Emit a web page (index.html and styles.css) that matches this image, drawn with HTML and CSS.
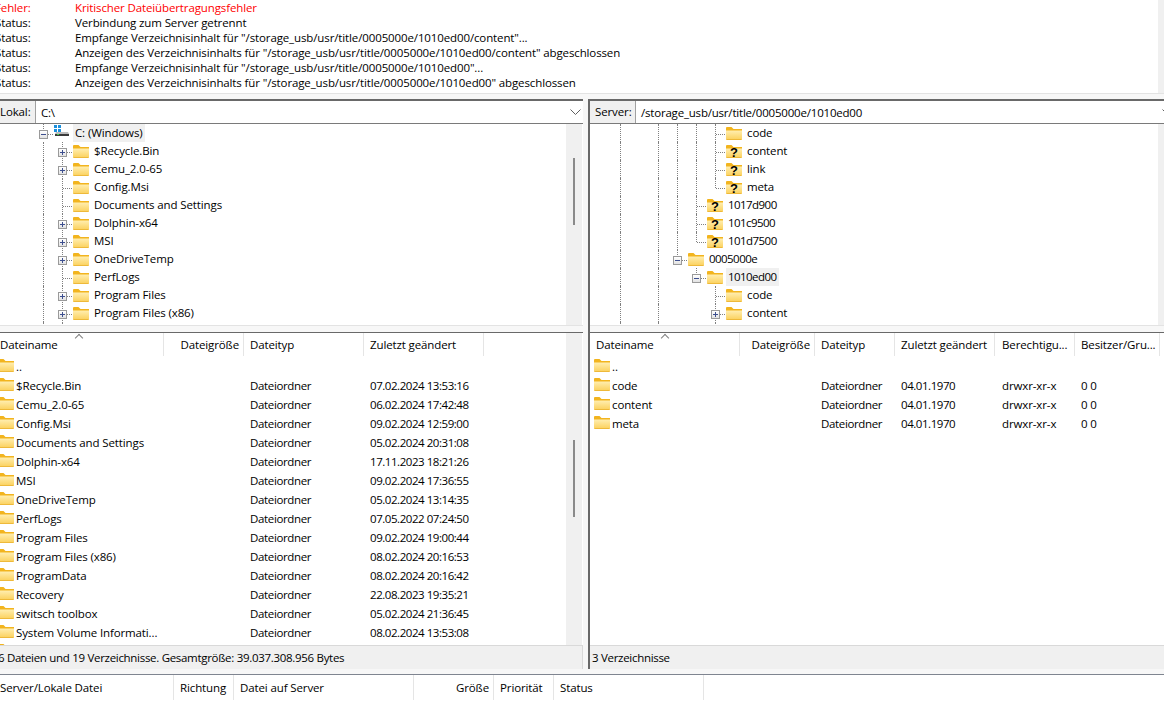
FILE: index.html
```html
<!DOCTYPE html>
<html lang="de">
<head>
    <meta charset="UTF-8">
    <title>FileZilla</title>
    <link rel="stylesheet" href="styles.css">
</head>
<body>
    <svg class="defs" width="0" height="0">
        <defs>
            <linearGradient id="fbody" x1="0" y1="0" x2="0" y2="1">
                <stop offset="0" stop-color="#ffeeb0"/>
                <stop offset="1" stop-color="#fbd05a"/>
            </linearGradient>
            <symbol id="folder" viewBox="0 0 16 13">
                <path d="M0 1.2C0 .5.5 0 1.2 0h4.3l2 2H16v3H0z" fill="#f2b41e"/>
                <path d="M0 3.5h16V12a1 1 0 0 1-1 1H1a1 1 0 0 1-1-1z" fill="url(#fbody)"/>
                <path d="M.5 12.5h15" stroke="#eeb93a"/>
            </symbol>
            <symbol id="folder-q" viewBox="0 0 16 13">
                <use href="#folder" width="16" height="13"/>
                <text x="8" y="12" class="q">?</text>
            </symbol>
        </defs>
    </svg>

    <div class="log">
        <div class="err"><span>Fehler:</span><span>Kritischer Dateiübertragungsfehler</span></div>
        <div><span>Status:</span><span>Verbindung zum Server getrennt</span></div>
        <div><span>Status:</span><span>Empfange Verzeichnisinhalt für "/storage_usb/usr/title/0005000e/1010ed00/content"...</span></div>
        <div><span>Status:</span><span>Anzeigen des Verzeichnisinhalts für "/storage_usb/usr/title/0005000e/1010ed00/content" abgeschlossen</span></div>
        <div><span>Status:</span><span>Empfange Verzeichnisinhalt für "/storage_usb/usr/title/0005000e/1010ed00"...</span></div>
        <div><span>Status:</span><span>Anzeigen des Verzeichnisinhalts für "/storage_usb/usr/title/0005000e/1010ed00" abgeschlossen</span></div>
    </div>

    <div class="panes">
        <!-- local side -->
        <section class="pane pane-local">
            <div class="pathbar">
                <label>Lokal:</label>
                <div class="path">C:\<svg class="chev" width="11" height="6" viewBox="0 0 11 6"><path d="M.5.5l5 5 5-5" fill="none" stroke="#606060"/></svg></div>
            </div>
            <div class="tree-wrap">
                <div class="tree tree-local">
                    <div class="node"><i class="c minus"></i><svg class="drive" width="16" height="13" viewBox="0 0 16 13"><path d="M0 0h3v3H0zM4 0h3v3H4zM0 4h3v3H0zM4 4h3v3H4z" fill="#1b8fdc"/><path d="M2 7h12l1 2H1z" fill="#bcbcbc"/><path d="M1 9h14v2H1z" fill="#3a3a3a"/><path d="M3 9h2v1H3z" fill="#3fd14a"/></svg><span class="sel">C: (Windows)</span></div>
                    <div class="node"><i class="c g"></i><i class="c plus"></i><svg class="ic"><use href="#folder"/></svg><span>$Recycle.Bin</span></div>
                    <div class="node"><i class="c g"></i><i class="c plus"></i><svg class="ic"><use href="#folder"/></svg><span>Cemu_2.0-65</span></div>
                    <div class="node"><i class="c g"></i><i class="c t"></i><svg class="ic"><use href="#folder"/></svg><span>Config.Msi</span></div>
                    <div class="node"><i class="c g"></i><i class="c t"></i><svg class="ic"><use href="#folder"/></svg><span>Documents and Settings</span></div>
                    <div class="node"><i class="c g"></i><i class="c plus"></i><svg class="ic"><use href="#folder"/></svg><span>Dolphin-x64</span></div>
                    <div class="node"><i class="c g"></i><i class="c plus"></i><svg class="ic"><use href="#folder"/></svg><span>MSI</span></div>
                    <div class="node"><i class="c g"></i><i class="c plus"></i><svg class="ic"><use href="#folder"/></svg><span>OneDriveTemp</span></div>
                    <div class="node"><i class="c g"></i><i class="c t"></i><svg class="ic"><use href="#folder"/></svg><span>PerfLogs</span></div>
                    <div class="node"><i class="c g"></i><i class="c plus"></i><svg class="ic"><use href="#folder"/></svg><span>Program Files</span></div>
                    <div class="node"><i class="c g"></i><i class="c plus"></i><svg class="ic"><use href="#folder"/></svg><span>Program Files (x86)</span></div>
                    <div class="node"><i class="c g"></i><i class="c t"></i><svg class="ic"><use href="#folder"/></svg><span>ProgramData</span></div>
                </div>
                <div class="vscroll"><b class="thumb thumb-tree"></b></div>
            </div>
            <div class="sash"></div>
            <div class="list-wrap">
                <div class="list list-local">
                    <div class="row head"><span>Dateiname</span><span class="num">Dateigröße</span><span>Dateityp</span><span>Zuletzt geändert</span></div>
                    <div class="sort"></div>
                    <div class="row"><span class="name"><svg class="ic"><use href="#folder"/></svg>..</span></div>
                    <div class="row"><span class="name"><svg class="ic"><use href="#folder"/></svg>$Recycle.Bin</span><span></span><span>Dateiordner</span><span>07.02.2024 13:53:16</span></div>
                    <div class="row"><span class="name"><svg class="ic"><use href="#folder"/></svg>Cemu_2.0-65</span><span></span><span>Dateiordner</span><span>06.02.2024 17:42:48</span></div>
                    <div class="row"><span class="name"><svg class="ic"><use href="#folder"/></svg>Config.Msi</span><span></span><span>Dateiordner</span><span>09.02.2024 12:59:00</span></div>
                    <div class="row"><span class="name"><svg class="ic"><use href="#folder"/></svg>Documents and Settings</span><span></span><span>Dateiordner</span><span>05.02.2024 20:31:08</span></div>
                    <div class="row"><span class="name"><svg class="ic"><use href="#folder"/></svg>Dolphin-x64</span><span></span><span>Dateiordner</span><span>17.11.2023 18:21:26</span></div>
                    <div class="row"><span class="name"><svg class="ic"><use href="#folder"/></svg>MSI</span><span></span><span>Dateiordner</span><span>09.02.2024 17:36:55</span></div>
                    <div class="row"><span class="name"><svg class="ic"><use href="#folder"/></svg>OneDriveTemp</span><span></span><span>Dateiordner</span><span>05.02.2024 13:14:35</span></div>
                    <div class="row"><span class="name"><svg class="ic"><use href="#folder"/></svg>PerfLogs</span><span></span><span>Dateiordner</span><span>07.05.2022 07:24:50</span></div>
                    <div class="row"><span class="name"><svg class="ic"><use href="#folder"/></svg>Program Files</span><span></span><span>Dateiordner</span><span>09.02.2024 19:00:44</span></div>
                    <div class="row"><span class="name"><svg class="ic"><use href="#folder"/></svg>Program Files (x86)</span><span></span><span>Dateiordner</span><span>08.02.2024 20:16:53</span></div>
                    <div class="row"><span class="name"><svg class="ic"><use href="#folder"/></svg>ProgramData</span><span></span><span>Dateiordner</span><span>08.02.2024 20:16:42</span></div>
                    <div class="row"><span class="name"><svg class="ic"><use href="#folder"/></svg>Recovery</span><span></span><span>Dateiordner</span><span>22.08.2023 19:35:21</span></div>
                    <div class="row"><span class="name"><svg class="ic"><use href="#folder"/></svg>switsch toolbox</span><span></span><span>Dateiordner</span><span>05.02.2024 21:36:45</span></div>
                    <div class="row"><span class="name"><svg class="ic"><use href="#folder"/></svg>System Volume Informati...</span><span></span><span>Dateiordner</span><span>08.02.2024 13:53:08</span></div>
                    <div class="row"><span class="name"><svg class="ic"><use href="#folder"/></svg></span></div>
                </div>
                <div class="vscroll"><b class="thumb thumb-list"></b></div>
            </div>
            <div class="status status-local">6 Dateien und 19 Verzeichnisse. Gesamtgröße: 39.037.308.956 Bytes</div>
        </section>

        <div class="vsash"></div>

        <!-- remote side -->
        <section class="pane pane-remote">
            <div class="pathbar">
                <label>Server:</label>
                <div class="path">/storage_usb/usr/title/0005000e/1010ed00<svg class="chev" width="11" height="6" viewBox="0 0 11 6"><path d="M.5.5l5 5 5-5" fill="none" stroke="#606060"/></svg></div>
            </div>
            <div class="tree-wrap">
                <div class="tree tree-remote">
                    <div class="node"><i class="c g"></i><i class="c"></i><i class="c g"></i><i class="c g"></i><i class="c g"></i><i class="c t"></i><svg class="ic"><use href="#folder"/></svg><span>code</span></div>
                    <div class="node"><i class="c g"></i><i class="c"></i><i class="c g"></i><i class="c g"></i><i class="c g"></i><i class="c t"></i><svg class="ic"><use href="#folder-q"/></svg><span>content</span></div>
                    <div class="node"><i class="c g"></i><i class="c"></i><i class="c g"></i><i class="c g"></i><i class="c g"></i><i class="c t"></i><svg class="ic"><use href="#folder-q"/></svg><span>link</span></div>
                    <div class="node"><i class="c g"></i><i class="c"></i><i class="c g"></i><i class="c g"></i><i class="c g"></i><i class="c e"></i><svg class="ic"><use href="#folder-q"/></svg><span>meta</span></div>
                    <div class="node"><i class="c g"></i><i class="c"></i><i class="c g"></i><i class="c g"></i><i class="c t"></i><svg class="ic"><use href="#folder-q"/></svg><span class="hex">1017d900</span></div>
                    <div class="node"><i class="c g"></i><i class="c"></i><i class="c g"></i><i class="c g"></i><i class="c t"></i><svg class="ic"><use href="#folder-q"/></svg><span class="hex">101c9500</span></div>
                    <div class="node"><i class="c g"></i><i class="c"></i><i class="c g"></i><i class="c g"></i><i class="c e"></i><svg class="ic"><use href="#folder-q"/></svg><span class="hex">101d7500</span></div>
                    <div class="node"><i class="c g"></i><i class="c"></i><i class="c g"></i><i class="c minus"></i><svg class="ic"><use href="#folder"/></svg><span class="hex">0005000e</span></div>
                    <div class="node"><i class="c g"></i><i class="c"></i><i class="c g"></i><i class="c"></i><i class="c minus"></i><svg class="ic"><use href="#folder"/></svg><span class="sel hex">1010ed00</span></div>
                    <div class="node"><i class="c g"></i><i class="c"></i><i class="c g"></i><i class="c"></i><i class="c"></i><i class="c t"></i><svg class="ic"><use href="#folder"/></svg><span>code</span></div>
                    <div class="node"><i class="c g"></i><i class="c"></i><i class="c g"></i><i class="c"></i><i class="c"></i><i class="c plus"></i><svg class="ic"><use href="#folder"/></svg><span>content</span></div>
                    <div class="node"><i class="c g"></i><i class="c"></i><i class="c g"></i><i class="c"></i><i class="c"></i><i class="c t"></i><svg class="ic"><use href="#folder"/></svg><span>meta</span></div>
                </div>
                <div class="gutter"></div>
            </div>
            <div class="sash"></div>
            <div class="list-wrap">
                <div class="list list-remote">
                    <div class="row head"><span>Dateiname</span><span class="num">Dateigröße</span><span>Dateityp</span><span>Zuletzt geändert</span><span>Berechtigu...</span><span>Besitzer/Gru...</span></div>
                    <div class="sort"></div>
                    <div class="row"><span class="name"><svg class="ic"><use href="#folder"/></svg>..</span></div>
                    <div class="row"><span class="name"><svg class="ic"><use href="#folder"/></svg>code</span><span></span><span>Dateiordner</span><span>04.01.1970</span><span>drwxr-xr-x</span><span>0 0</span></div>
                    <div class="row"><span class="name"><svg class="ic"><use href="#folder"/></svg>content</span><span></span><span>Dateiordner</span><span>04.01.1970</span><span>drwxr-xr-x</span><span>0 0</span></div>
                    <div class="row"><span class="name"><svg class="ic"><use href="#folder"/></svg>meta</span><span></span><span>Dateiordner</span><span>04.01.1970</span><span>drwxr-xr-x</span><span>0 0</span></div>
                </div>
            </div>
            <div class="status">3 Verzeichnisse</div>
        </section>
    </div>

    <div class="queue">
        <div class="queue-head"><span>Server/Lokale Datei</span><span>Richtung</span><span>Datei auf Server</span><span class="num">Größe</span><span>Priorität</span><span>Status</span></div>
    </div>
</body>
</html>
```

FILE: styles.css
```css
* {
    margin: 0;
    padding: 0;
    box-sizing: border-box;
}

html, body {
    height: 100%;
    overflow: hidden;
}

body {
    background-color: #fff;
    color: #000;
    font-family: 'Open Sans', 'Noto Sans', sans-serif;
    font-size: 11.5px;
    letter-spacing: -0.12px;
    display: flex;
    flex-direction: column;
}

.defs {
    position: absolute;
}

.q {
    font-family: 'Liberation Sans', sans-serif;
    font-size: 13px;
    font-weight: 700;
    text-anchor: middle;
    fill: #000;
}

/* message log */
.log {
    height: 94px;
    flex: none;
    margin-left: -5px;
    border-bottom: 1px solid #e3e3e3;
    background: linear-gradient(#f0f0f0, #f0f0f0) no-repeat right top / 6px 100%;
}

.log div {
    height: 15px;
    line-height: 15px;
    display: flex;
    white-space: nowrap;
}

.log span:first-child {
    width: 80px;
}

.err {
    color: #ff0000;
}

/* panes */
.panes {
    height: 580px;
    flex: none;
    display: flex;
    padding: 5px 0;
    background-color: #f7f7f7;
}

.pane {
    display: flex;
    flex-direction: column;
    background-color: #fff;
    border-top: 2px solid #696969;
}

.pane-local {
    width: 583px;
    flex: none;
}

.pane-remote {
    flex: 1;
    border-left: 2px solid #696969;
    min-width: 0;
}

.vsash {
    width: 5px;
    flex: none;
}

.pathbar {
    height: 23px;
    display: flex;
    flex: none;
    border-bottom: 1px solid #7a7a7a;
    line-height: 21px;
    background-color: #fff;
}

.pathbar label {
    background-color: #f0f0f0;
    width: 46px;
    flex: none;
    padding-left: 5px;
    border-right: 1px solid #a0a0a0;
}

.pane-local .pathbar label {
    margin-left: -5px;
    width: 41px;
}

.path {
    flex: 1;
    min-width: 0;
    padding-left: 5px;
    display: flex;
    align-items: center;
    justify-content: space-between;
    white-space: nowrap;
    letter-spacing: -0.2px;
}

.chev {
    margin-right: 2px;
    flex: none;
}

.pane-remote .chev {
    margin-right: -9px;
}

/* directory trees */
.tree-wrap {
    height: 201px;
    flex: none;
    display: flex;
    overflow: hidden;
}

.tree {
    flex: 1;
    min-width: 0;
}

.tree-local {
    padding-left: 34px;
}

.tree-remote {
    padding-left: 21px;
}

.gutter {
    width: 6px;
    flex: none;
    background-color: #f0f0f0;
}

.node {
    height: 18px;
    display: flex;
    align-items: center;
    white-space: nowrap;
}

.node span {
    height: 18px;
    line-height: 18px;
    padding: 0 2px;
    margin-left: 3px;
}

.node .hex {
    letter-spacing: -0.55px;
}

.node .sel {
    background-color: #f0f0f0;
}

.ic {
    width: 16px;
    height: 13px;
    flex: none;
}

.node .ic {
    margin-left: 1px;
}

.drive {
    margin-left: 1px;
    align-self: flex-start;
    margin-top: 1px;
    flex: none;
}

/* tree connector cells */
.c {
    width: 19px;
    height: 18px;
    flex: none;
    position: relative;
}

.g::before, .t::before, .e::before {
    content: "";
    position: absolute;
    left: 9px;
    top: 0;
    bottom: 0;
    border-left: 1px dotted #808080;
}

.e::before {
    bottom: 8px;
}

.t::after, .e::after, .plus::after, .minus::after {
    content: "";
    position: absolute;
    left: 10px;
    width: 9px;
    top: 10px;
    border-top: 1px dotted #808080;
}

.plus::after, .minus::after {
    left: 14px;
    width: 5px;
}

/* box, sign and guide line are background layers, sign first */
.plus, .minus {
    background-repeat: no-repeat;
}

.plus {
    background-image:
        linear-gradient(#3d4f8f, #3d4f8f),
        linear-gradient(#3d4f8f, #3d4f8f),
        linear-gradient(#fff, #e2e2e2),
        linear-gradient(#9a9a9a, #9a9a9a),
        repeating-linear-gradient(#808080 0 1px, transparent 1px 2px);
    background-size: 5px 1px, 1px 5px, 7px 7px, 9px 9px, 1px 18px;
    background-position: 7px 10px, 9px 8px, 6px 7px, 5px 6px, 9px 0;
}

.minus {
    background-image:
        linear-gradient(#3d4f8f, #3d4f8f),
        linear-gradient(#fff, #e2e2e2),
        linear-gradient(#9a9a9a, #9a9a9a),
        repeating-linear-gradient(#808080 0 1px, transparent 1px 2px);
    background-size: 5px 1px, 7px 7px, 9px 9px, 1px 6px;
    background-position: 7px 10px, 6px 7px, 5px 6px, 9px 0;
}

/* scrollbars */
.vscroll {
    width: 16px;
    flex: none;
    background-color: #f0f0f0;
    position: relative;
    margin-right: 1px;
}

.thumb {
    position: absolute;
    left: 7px;
    width: 2px;
    background-color: #8a8a8a;
}

.thumb-tree {
    top: 34px;
    height: 67px;
}

.thumb-list {
    top: 107px;
    height: 77px;
}

.sash {
    height: 8px;
    flex: none;
    background-color: #f7f7f7;
    border-top: 1px solid #e3e3e3;
    border-bottom: 1px solid #696969;
}

/* file lists */
.list-wrap {
    height: 312px;
    flex: none;
    display: flex;
    overflow: hidden;
}

.list {
    flex: 1;
    min-width: 0;
    position: relative;
}

.row {
    height: 19px;
    line-height: 19px;
    display: grid;
    white-space: nowrap;
}

.list-local .row {
    grid-template-columns: 164px 80px 120px 120px;
}

.list-remote .row {
    grid-template-columns: 150px 75px 80px 100px 80px 85px;
}

.row span {
    padding-left: 6px;
}

.list-remote .row span:nth-child(5) {
    padding-left: 7px;
}

.row:not(.head) span:nth-child(3) {
    letter-spacing: -0.35px;
}

.row:not(.head) span:nth-child(4) {
    letter-spacing: -0.45px;
}

.row .name {
    padding-left: 0;
    display: flex;
    align-items: center;
    gap: 2px;
}

.row .ic {
    margin-bottom: 2px;
}

.list-local .name {
    margin-left: -2px;
}

.list-remote .name {
    margin-left: 4px;
}

.head {
    height: 24px;
    line-height: 23px;
}

.head span {
    border-right: 1px solid #e5e5e5;
    height: 23px;
}

.head .num {
    text-align: right;
    padding-right: 4px;
}

.list-local .head span:first-child {
    padding-left: 0;
}

.sort {
    position: absolute;
    top: 2px;
    left: 76px;
    width: 6px;
    height: 6px;
    border-left: 1px solid #808080;
    border-top: 1px solid #808080;
    transform: rotate(45deg);
}

.list-remote .sort {
    left: 72px;
}

/* status bars */
.status {
    height: 24px;
    flex: none;
    line-height: 24px;
    background-color: #f0f0f0;
    border-top: 1px solid #d9d9d9;
    padding-left: 2px;
    white-space: nowrap;
    letter-spacing: -0.3px;
}

.status-local {
    margin-left: -4px;
    border-right: 1px solid #d9d9d9;
}

/* transfer queue */
.queue {
    flex: 1;
    border-top: 1px solid #7f8590;
}

.queue-head {
    display: grid;
    grid-template-columns: 174px 60px 180px 80px 60px 150px;
    height: 25px;
    line-height: 25px;
}

.queue-head span {
    padding-left: 6px;
    border-right: 1px solid #e5e5e5;
}

.queue-head span:first-child {
    padding-left: 0;
}

.queue-head .num {
    text-align: right;
    padding-right: 4px;
}
```
